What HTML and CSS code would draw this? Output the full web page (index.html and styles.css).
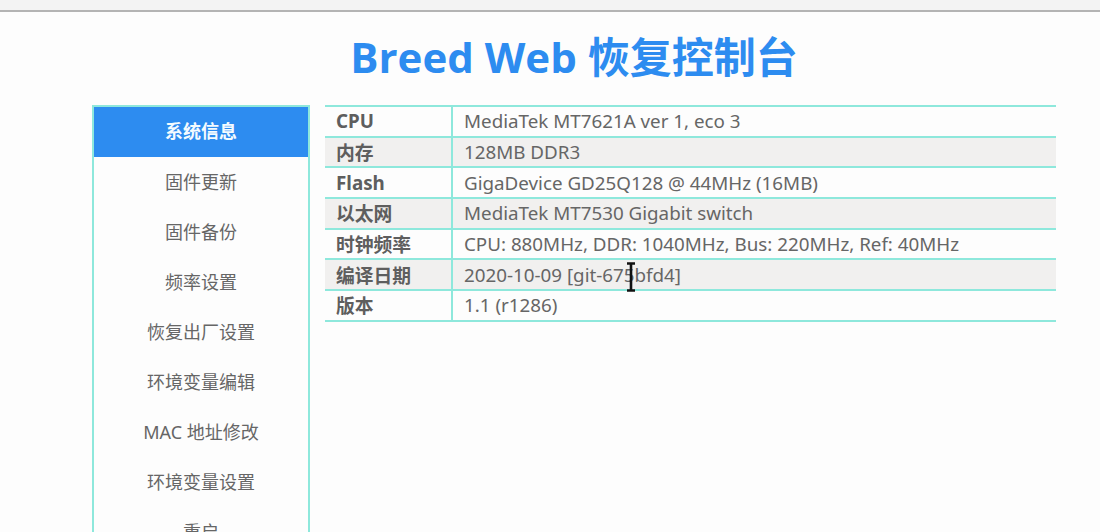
FILE: index.html
```html
<!DOCTYPE html>
<html lang="zh-CN">
<head>
<meta charset="utf-8">
<title>Breed Web 恢复控制台</title>
<link rel="stylesheet" href="styles.css">
</head>
<body>
<div class="topbar"></div>
<h1 class="title">Breed Web 恢复控制台</h1>
<div class="main">
  <nav class="sidebar">
    <a class="nav-item active">系统信息</a>
    <a class="nav-item">固件更新</a>
    <a class="nav-item">固件备份</a>
    <a class="nav-item">频率设置</a>
    <a class="nav-item">恢复出厂设置</a>
    <a class="nav-item">环境变量编辑</a>
    <a class="nav-item">MAC 地址修改</a>
    <a class="nav-item">环境变量设置</a>
    <a class="nav-item">重启</a>
  </nav>
  <div class="content">
    <table class="info">
      <tr><th>CPU</th><td>MediaTek MT7621A ver 1, eco 3</td></tr>
      <tr><th>内存</th><td>128MB DDR3</td></tr>
      <tr><th>Flash</th><td>GigaDevice GD25Q128 @ 44MHz (16MB)</td></tr>
      <tr><th>以太网</th><td>MediaTek MT7530 Gigabit switch</td></tr>
      <tr><th>时钟频率</th><td>CPU: 880MHz, DDR: 1040MHz, Bus: 220MHz, Ref: 40MHz</td></tr>
      <tr><th>编译日期</th><td class="cursor-cell">2020-10-09 [git-675bfd4]<svg class="ibeam" width="10" height="30" viewBox="0 0 10 30"><path d="M1 1.5h8M1 28.5h8M5 1.5v27" stroke="#111" stroke-width="2.6" fill="none"/></svg></td></tr>
      <tr><th>版本</th><td>1.1 (r1286)</td></tr>
    </table>
  </div>
</div>
</body>
</html>
```
FILE: styles.css
```css
html, body {
  margin: 0;
  padding: 0;
  background: #fdfdfd;
}
body {
  font-family: "Noto Sans", "Open Sans", "Noto Sans CJK SC", sans-serif;
  color: #666;
  overflow: hidden;
}
.topbar {
  height: 10px;
  background: #f3f3f3;
  border-bottom: 2px solid #b4b4b4;
}
.title {
  margin: 17px 0 0 48px;
  text-align: center;
  font-family: "Open Sans", "Noto Sans CJK SC", sans-serif;
  font-size: 42px;
  font-weight: 700;
  color: #2d8cf0;
  line-height: 56px;
  height: 76px;
}
.main {
  display: flex;
  gap: 15px;
  margin-left: 92px;
  width: 964px;
}
.sidebar {
  width: 214px;
  flex: none;
  border: 2px solid #8ee8dc;
  border-bottom: none;
  display: flex;
  flex-direction: column;
  height: 440px;
}
.nav-item {
  display: block;
  flex: none;
  height: 50px;
  line-height: 50px;
  text-align: center;
  font-size: 18px;
  color: #666;
  font-family: "Noto Sans", "Noto Sans CJK SC", sans-serif;
}
.nav-item.active {
  background: #2d8cf0;
  color: #f4fbff;
  font-weight: 700;
  height: 50px;
  line-height: 48px;
}
.content {
  flex: 1;
}
.info {
  width: 731px;
  border-collapse: collapse;
  font-size: 18.8px;
}
.info tr {
  border-top: 2px solid #8ee8dc;
  border-bottom: 2px solid #8ee8dc;
}
.info tr:nth-child(even) {
  background: #f1f0ef;
}
.info th, .info td {
  height: 28.7px;
  padding: 0 11px;
  text-align: left;
  white-space: nowrap;
}
.info th {
  width: 104px;
  font-weight: 700;
  color: #5e5e5e;
  border-right: 2px solid #8ee8dc;
}
.info td {
  color: #666;
}
.cursor-cell {
  position: relative;
}
.ibeam {
  position: absolute;
  left: 173px;
  top: 2px;
}
```
